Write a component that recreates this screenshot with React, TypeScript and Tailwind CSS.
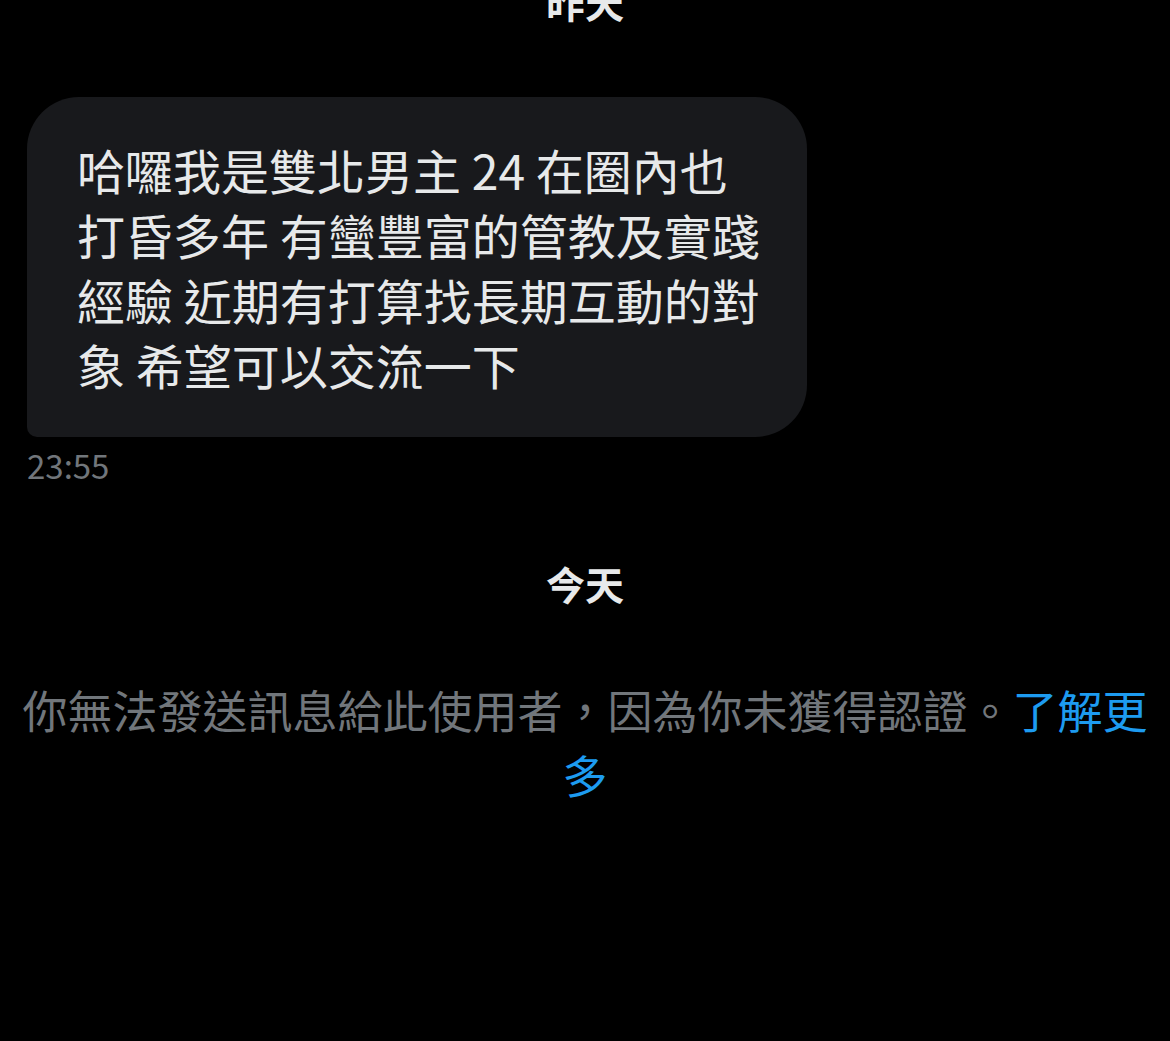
import React from "react";

const font = { fontFamily: '"Noto Sans CJK TC", "Noto Sans", sans-serif' };

export default function App() {
  const lines = [
    "哈囉我是雙北男主 24 在圈內也",
    "打昏多年 有蠻豐富的管教及實踐",
    "經驗 近期有打算找長期互動的對",
    "象 希望可以交流一下",
  ];
  return (
    <div className="w-[1170px] h-[1041px] bg-black overflow-hidden" style={font}>
      <div className="-mt-[29px] flex flex-col">
        <div className="text-center text-[39px] leading-[60px] font-semibold text-[#e7e9ea]">昨天</div>
        <div className="mt-[66px] pl-[27px]">
          <div className="w-[780px] bg-[#18191c] rounded-[52px] rounded-bl-[10px] pl-[50px] pr-[30px] py-[40px] text-[48px] leading-[65px] text-[#e7e9ea]">
            {lines.map((l, i) => (
              <div key={i} className="whitespace-pre">{l}</div>
            ))}
          </div>
          <div className="mt-[6px] text-[33px] leading-[44px] text-[#71767b]">23:55</div>
        </div>
        <div className="mt-[66px] text-center text-[39px] leading-[60px] font-semibold text-[#e7e9ea]">今天</div>
        <div className="mt-[64px] px-[20px] text-center text-[45px] leading-[65px] text-[#71767b]">
          你無法發送訊息給此使用者，因為你未獲得認證。<span className="text-[#1d9bf0]">了解更多</span>
        </div>
      </div>
    </div>
  );
}
